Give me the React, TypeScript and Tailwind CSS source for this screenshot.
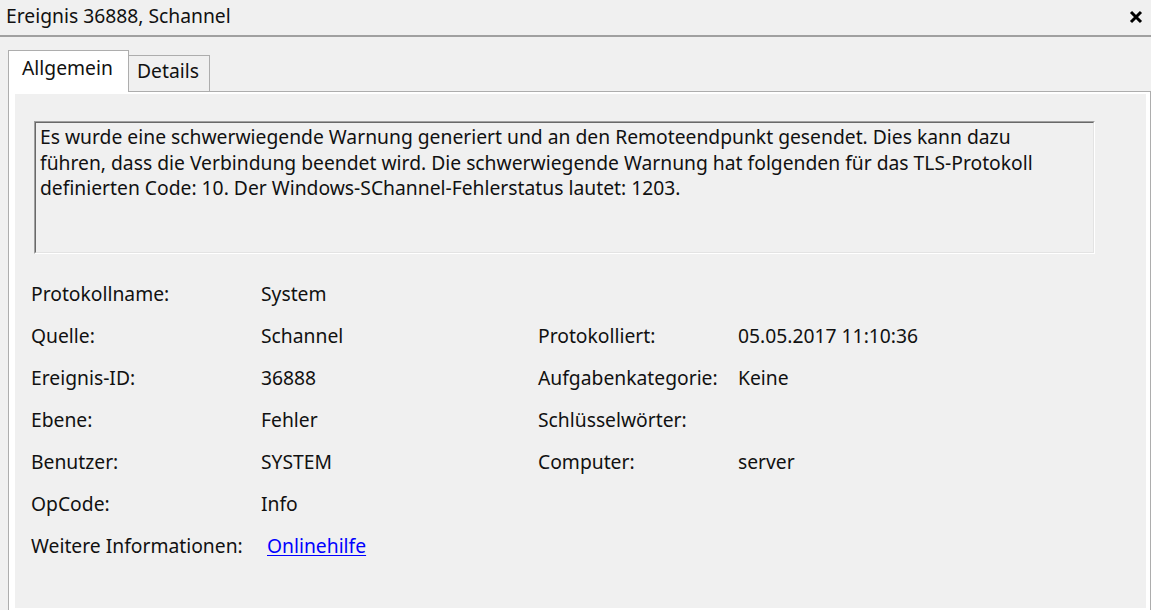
import React from 'react';

// Field rows of the "Allgemein" page: left pair, optional right pair
type Row = {
  label: string;
  value?: string;
  link?: string;
  rightLabel?: string;
  rightValue?: string;
};

const ROWS: Row[] = [
  { label: 'Protokollname:', value: 'System' },
  { label: 'Quelle:', value: 'Schannel', rightLabel: 'Protokolliert:', rightValue: '05.05.2017 11:10:36' },
  { label: 'Ereignis-ID:', value: '36888', rightLabel: 'Aufgabenkategorie:', rightValue: 'Keine' },
  { label: 'Ebene:', value: 'Fehler', rightLabel: 'Schlüsselwörter:', rightValue: '' },
  { label: 'Benutzer:', value: 'SYSTEM', rightLabel: 'Computer:', rightValue: 'server' },
  { label: 'OpCode:', value: 'Info' },
  { label: 'Weitere Informationen:', link: 'Onlinehilfe' },
];

const DESCRIPTION = [
  'Es wurde eine schwerwiegende Warnung generiert und an den Remoteendpunkt gesendet. Dies kann dazu',
  'führen, dass die Verbindung beendet wird. Die schwerwiegende Warnung hat folgenden für das TLS-Protokoll',
  'definierten Code: 10. Der Windows-SChannel-Fehlerstatus lautet: 1203.',
];

export default function App() {
  return (
    <div className="w-[1151px] h-[610px] bg-[#f0f0f0] text-[#111] overflow-hidden font-['Noto_Sans',sans-serif] text-[19.3px]">
      {/* Title bar */}
      <div className="h-[35px] flex items-center justify-between pl-[6px] pr-[8px]">
        <span className="mt-[-2px]">Ereignis 36888, Schannel</span>
        <svg width="14" height="14" viewBox="0 0 14 14" className="mt-[-2px]">
          <path d="M2 2 L12 12 M12 2 L2 12" stroke="#000" strokeWidth="3" />
        </svg>
      </div>
      <div className="h-[2px] bg-[#a0a0a0]" />

      {/* Tabs */}
      <div className="flex items-end pl-[8px] mt-[12px] h-[42px]">
        <div className="relative z-10 h-[42px] w-[121px] bg-white border border-b-0 border-[#adadad] pl-[13px] pt-[3px] mb-[-1px]">
          Allgemein
        </div>
        <div className="h-[36px] w-[81px] border border-l-0 border-b-0 border-[#adadad] pl-[8px] pt-[1px]">
          Details
        </div>
      </div>

      {/* Tab page */}
      <div className="ml-[8px] h-[522px] border border-[#adadad] bg-white pt-[2px] pl-[6px] pr-[4px] pb-[4px]">
        <div className="h-full bg-[#f0f0f0] pt-[27px] pl-[19px] pr-[51px]">
          {/* Read-only description box */}
          <div className="h-[133px] border border-t-[#a0a0a0] border-l-[#a0a0a0] border-b-white border-r-white">
            <div className="h-full border border-t-[#696969] border-l-[#696969] border-b-[#e3e3e3] border-r-[#e3e3e3] pl-[4px] pt-[1px] leading-[25.5px]">
              {DESCRIPTION.map((line) => (
                <div key={line} className="whitespace-nowrap">{line}</div>
              ))}
            </div>
          </div>

          {/* Properties */}
          <div className="mt-[19px] ml-[-3px]">
            {ROWS.map((row) => (
              <div key={row.label} className="h-[42px] flex items-center">
                <span className="w-[230px] shrink-0">{row.label}</span>
                {row.link ? (
                  <a href="#" className="ml-[6px] text-[#0000ff] underline underline-offset-2">{row.link}</a>
                ) : (
                  <span className="w-[277px] shrink-0">{row.value}</span>
                )}
                {row.rightLabel && (
                  <>
                    <span className="w-[200px] shrink-0">{row.rightLabel}</span>
                    <span>{row.rightValue}</span>
                  </>
                )}
              </div>
            ))}
          </div>
        </div>
      </div>
    </div>
  );
}
